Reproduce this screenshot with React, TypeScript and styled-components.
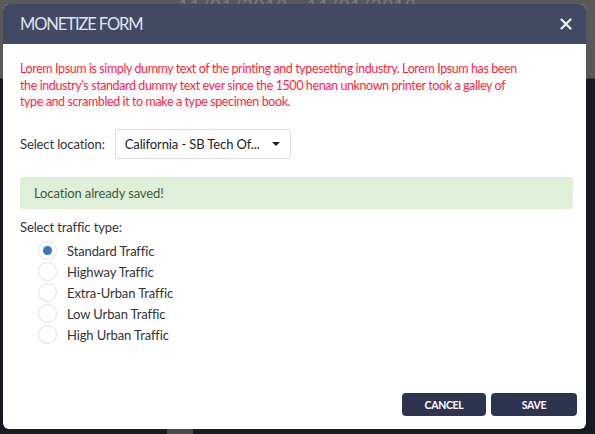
import React, { useState } from 'react';
import styled, { createGlobalStyle } from 'styled-components';

const Global = createGlobalStyle`
    html, body {
        margin: 0;
        padding: 0;
        width: 595px;
        height: 434px;
        overflow: hidden;
    }
    body {
        font-family: Lato, 'Open Sans', sans-serif;
    }
`;

const Page = styled.div`
    position: relative;
    width: 595px;
    height: 434px;
    display: flex;
    flex-direction: column;
    background: #171a22;
`;

const TopBar = styled.div`
    height: 78px;
    background: #595959;
    border-bottom: 1px solid #3a3a3a;
    display: flex;
    justify-content: center;
    color: #7a7a7a;
    font-size: 18px;
    line-height: 10px;
    letter-spacing: 1px;
`;

const Body = styled.div`
    flex: 1;
    position: relative;
`;

const Stub = styled.div`
    position: absolute;
    left: 167px;
    bottom: 0;
    width: 26px;
    height: 6px;
    background: #4b4b4b;
`;

const Modal = styled.div`
    position: absolute;
    left: 3px;
    top: 4px;
    width: 583px;
    height: 425px;
    background: #fff;
    border-radius: 6px;
    overflow: hidden;
    display: flex;
    flex-direction: column;
`;

const Header = styled.div`
    height: 40px;
    background: #424963;
    display: flex;
    align-items: center;
    justify-content: space-between;
    padding: 0 14px 0 17px;
`;

const Title = styled.h2`
    margin: 0;
    font-size: 16.5px;
    font-weight: 400;
    letter-spacing: -1.1px;
    color: #dde4f2;
`;

const Close = styled.button`
    background: none;
    border: 0;
    padding: 0;
    display: flex;
    color: #eef2fa;
    cursor: pointer;
`;

const Content = styled.div`
    flex: 1;
    padding: 17px 13px 0 17px;
    display: flex;
    flex-direction: column;
    font-size: 13px;
    letter-spacing: -0.12px;
    color: #333;
`;

const Warning = styled.p`
    margin: 0;
    max-width: 500px;
    color: #ff1f3d;
    font-size: 12.5px;
    line-height: 16.5px;
    letter-spacing: -0.4px;
`;

const LocationRow = styled.div`
    display: flex;
    align-items: center;
    gap: 10px;
    margin-top: 18px;
`;

const SelectBox = styled.div`
    width: 176px;
    height: 30px;
    box-sizing: border-box;
    border: 1px solid #dcdcdc;
    border-radius: 3px;
    display: flex;
    align-items: center;
    justify-content: space-between;
    padding: 0 10px 0 9px;
    color: #222;
`;

const Caret = styled.span`
    width: 0;
    height: 0;
    border-left: 4px solid transparent;
    border-right: 4px solid transparent;
    border-top: 4px solid #222;
`;

const Alert = styled.div`
    margin-top: 18px;
    height: 32px;
    background: #dff0d8;
    border-radius: 3px;
    display: flex;
    align-items: center;
    padding: 0 14px;
    color: #3c5b3c;
`;

const Label = styled.div`
    margin-top: 10px;
`;

const RadioList = styled.div`
    display: flex;
    flex-direction: column;
    gap: 3px;
    margin-top: 7px;
    padding-left: 18px;
`;

const RadioRow = styled.label`
    display: flex;
    align-items: center;
    gap: 10px;
    height: 18px;
    cursor: pointer;
`;

const Circle = styled.span<{ $on: boolean }>`
    width: 19px;
    height: 19px;
    box-sizing: border-box;
    border-radius: 50%;
    border: 1px solid #e2e2e2;
    background: #fff;
    display: flex;
    align-items: center;
    justify-content: center;

    &::after {
        content: '';
        width: 9px;
        height: 9px;
        border-radius: 50%;
        background: ${(p) => (p.$on ? '#3378c0' : 'transparent')};
    }
`;

const Footer = styled.div`
    display: flex;
    justify-content: flex-end;
    gap: 5px;
    padding: 0 9px 13px 0;
`;

const Button = styled.button<{ $w: number }>`
    width: ${(p) => p.$w}px;
    height: 23px;
    border: 0;
    border-radius: 4px;
    background: #2e3450;
    color: #fff;
    font-family: Lato, sans-serif;
    font-size: 10.5px;
    font-weight: 700;
    letter-spacing: -0.3px;
    cursor: pointer;
`;

const traffic = [
    'Standard Traffic',
    'Highway Traffic',
    'Extra-Urban Traffic',
    'Low Urban Traffic',
    'High Urban Traffic',
];

export default function App() {
    const [picked, setPicked] = useState(traffic[0]);

    return (
        <>
            <Global />
            <Page>
                <TopBar>11/01/2019 - 11/01/2019</TopBar>
                <Body>
                    <Stub />
                </Body>
                <Modal>
                    <Header>
                        <Title>MONETIZE FORM</Title>
                        <Close aria-label="close">
                            <svg width="12" height="12" viewBox="0 0 12 12">
                                <path d="M1.5 1.5 L10.5 10.5 M10.5 1.5 L1.5 10.5" stroke="currentColor" strokeWidth="2.2" strokeLinecap="round" />
                            </svg>
                        </Close>
                    </Header>
                    <Content>
                        <Warning>
                            Lorem Ipsum is simply dummy text of the printing and typesetting industry. Lorem Ipsum has been
                            the industry's standard dummy text ever since the 1500 henan unknown printer took a galley of
                            type and scrambled it to make a type specimen book.
                        </Warning>
                        <LocationRow>
                            Select location:
                            <SelectBox>
                                California - SB Tech Of...
                                <Caret />
                            </SelectBox>
                        </LocationRow>
                        <Alert>Location already saved!</Alert>
                        <Label>Select traffic type:</Label>
                        <RadioList>
                            {traffic.map((t) => (
                                <RadioRow key={t} onClick={() => setPicked(t)}>
                                    <Circle $on={picked === t} />
                                    {t}
                                </RadioRow>
                            ))}
                        </RadioList>
                    </Content>
                    <Footer>
                        <Button $w={84}>CANCEL</Button>
                        <Button $w={86}>SAVE</Button>
                    </Footer>
                </Modal>
            </Page>
        </>
    );
}
